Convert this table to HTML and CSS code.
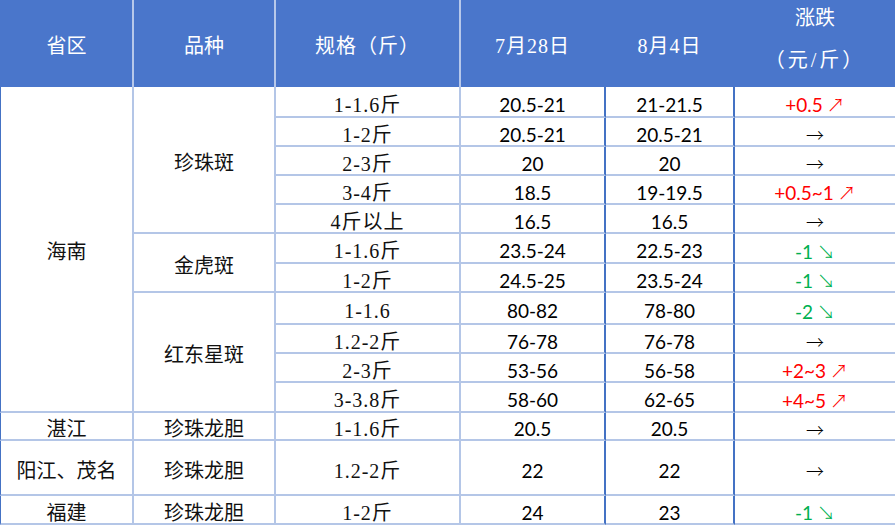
FILE: index.html
```html
<!DOCTYPE html>
<html lang="zh">
<head>
<meta charset="utf-8">
<link rel="stylesheet" href="styles.css">
</head>
<body>
<table class="grid">
  <thead>
    <tr class="head">
      <th class="c1">省区</th>
      <th class="c2">品种</th>
      <th class="c3">规格（斤）</th>
      <th class="c4">7月28日</th>
      <th class="c5">8月4日</th>
      <th class="c6"><span class="hl hl-top">涨跌</span><span class="hl hl-bottom">（元/斤）</span></th>
    </tr>
  </thead>
  <tbody>
    <tr class="h31">
      <td class="reg" rowspan="11">海南</td>
      <td class="kind" rowspan="5">珍珠斑</td>
      <td class="sp">1-1.6斤</td><td class="p1">20.5-21</td><td class="p2">21-21.5</td>
      <td class="ch up">+0.5<span class="ar">↗</span></td>
    </tr>
    <tr class="h29">
      <td class="sp">1-2斤</td><td class="p1">20.5-21</td><td class="p2">20.5-21</td>
      <td class="ch"><span class="ar flat">→</span></td>
    </tr>
    <tr class="h29">
      <td class="sp">2-3斤</td><td class="p1">20</td><td class="p2">20</td>
      <td class="ch"><span class="ar flat">→</span></td>
    </tr>
    <tr class="h29">
      <td class="sp">3-4斤</td><td class="p1">18.5</td><td class="p2">19-19.5</td>
      <td class="ch up">+0.5~1<span class="ar">↗</span></td>
    </tr>
    <tr class="h29">
      <td class="sp">4斤以上</td><td class="p1">16.5</td><td class="p2">16.5</td>
      <td class="ch"><span class="ar flat">→</span></td>
    </tr>
    <tr class="h30">
      <td class="kind" rowspan="2">金虎斑</td>
      <td class="sp">1-1.6斤</td><td class="p1">23.5-24</td><td class="p2">22.5-23</td>
      <td class="ch down">-1<span class="ar">↘</span></td>
    </tr>
    <tr class="h29">
      <td class="sp">1-2斤</td><td class="p1">24.5-25</td><td class="p2">23.5-24</td>
      <td class="ch down">-1<span class="ar">↘</span></td>
    </tr>
    <tr class="h32">
      <td class="kind" rowspan="4">红东星斑</td>
      <td class="sp">1-1.6</td><td class="p1">80-82</td><td class="p2">78-80</td>
      <td class="ch down">-2<span class="ar">↘</span></td>
    </tr>
    <tr class="h29">
      <td class="sp">1.2-2斤</td><td class="p1">76-78</td><td class="p2">76-78</td>
      <td class="ch"><span class="ar flat">→</span></td>
    </tr>
    <tr class="h29">
      <td class="sp">2-3斤</td><td class="p1">53-56</td><td class="p2">56-58</td>
      <td class="ch up">+2~3<span class="ar">↗</span></td>
    </tr>
    <tr class="h30">
      <td class="sp">3-3.8斤</td><td class="p1">58-60</td><td class="p2">62-65</td>
      <td class="ch up">+4~5<span class="ar">↗</span></td>
    </tr>
    <tr class="h28">
      <td class="reg">湛江</td><td class="kind">珍珠龙胆</td>
      <td class="sp">1-1.6斤</td><td class="p1">20.5</td><td class="p2">20.5</td>
      <td class="ch"><span class="ar flat">→</span></td>
    </tr>
    <tr class="h55">
      <td class="reg">阳江、茂名</td><td class="kind">珍珠龙胆</td>
      <td class="sp">1.2-2斤</td><td class="p1">22</td><td class="p2">22</td>
      <td class="ch"><span class="ar flat">→</span></td>
    </tr>
    <tr class="h29">
      <td class="reg">福建</td><td class="kind">珍珠龙胆</td>
      <td class="sp">1-2斤</td><td class="p1">24</td><td class="p2">23</td>
      <td class="ch down">-1<span class="ar">↘</span></td>
    </tr>
  </tbody>
</table>
</body>
</html>
```

FILE: styles.css
```css
html, body {
  margin: 0;
  padding: 0;
  background: #ffffff;
  overflow: hidden;
}

.grid {
  width: 895px;
  table-layout: fixed;
  border-collapse: separate;
  border-spacing: 0;
  font-family: "Liberation Serif", "Noto Sans CJK SC", serif;
  font-size: 20px;
  color: #111111;
}

.grid th,
.grid td {
  box-sizing: border-box;
  padding: 0;
  text-align: center;
  vertical-align: middle;
  white-space: nowrap;
  line-height: 1;
  overflow: hidden;
}

/* header */
.head { height: 87px; }
.grid th {
  height: 87px;
  background: #4a76cb;
  color: #ffffff;
  font-weight: normal;
  padding-top: 5px;
  border-right: 2px solid #b7c8ea;
}
.grid th.c1 { width: 134px; border-left: 1px solid #4a76cb; }
.grid th.c2 { width: 142px; }
.grid th.c3 { width: 185px; letter-spacing: 1px; }
.grid th.c4 { width: 145px; border-right-color: #4a76cb; letter-spacing: 1px; }
.grid th.c5 { width: 129px; border-right-color: #4a76cb; letter-spacing: 1px; }
.grid th.c6 { width: 160px; border-right: none; padding-top: 0; padding-bottom: 3px; }
.hl { display: block; }
.hl-top { line-height: 36px; }
.hl-bottom { line-height: 48px; letter-spacing: 3px; }

/* body */
.grid td {
  border-right: 2px solid #b4c6e7;
  border-bottom: 2px solid #b4c6e7;
  line-height: 18px;
  padding-top: 6px;
}
.grid td.reg { border-left: 1px solid #4472c4; }
.grid td.p1 { border-right-color: #4472c4; }
.grid td.p2 { border-right-color: #4472c4; }
.grid td.ch { border-right: none; }

.h28 { height: 28px; }
.h29 { height: 29px; }
.h30 { height: 30px; }
.h31 { height: 31px; }
.h32 { height: 32px; }
.h55 { height: 55px; }

.sp { letter-spacing: 1px; }

.p1, .p2, .ch {
  font-family: "Lato", "Liberation Sans", sans-serif;
  font-size: 19px;
  color: #000000;
}

.ch.up { color: #ff0000; }
.ch.down { color: #00b050; }

.ar {
  font-family: "Noto Sans CJK SC", sans-serif;
  font-size: 18px;
  font-weight: 300;
  margin-left: 4px;
}
.ar.flat {
  color: #000000;
  margin-left: 0;
}
```
